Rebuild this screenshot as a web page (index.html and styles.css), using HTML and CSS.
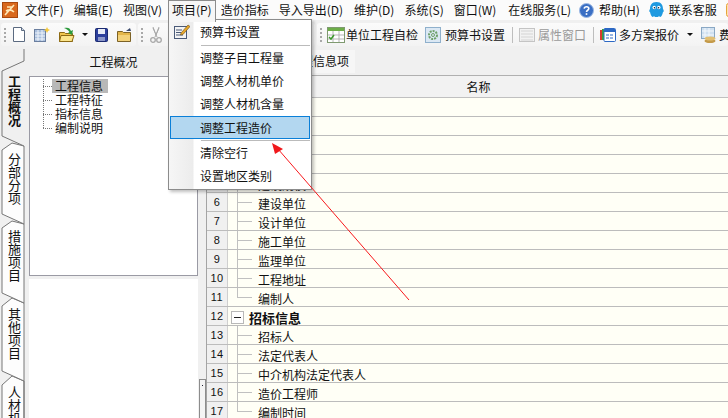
FILE: index.html
```html
<!DOCTYPE html>
<html lang="zh-CN">
<head>
<meta charset="utf-8">
<title>项目</title>
<link rel="stylesheet" href="styles.css">
</head>
<body>
<div class="app">

  <div class="menubar">
    <svg class="logo" width="16" height="16" viewBox="0 0 16 16"><rect x=".5" y=".5" width="15" height="15" fill="#d9691e" stroke="#a8480f"/><path d="M3 13L12 3M5 5h6M4 9c3-2 6-1 8 1" stroke="#ffe9b8" stroke-width="1.6" fill="none"/></svg>
    <span class="menu-item">文件(F)</span>
    <span class="menu-item">编辑(E)</span>
    <span class="menu-item">视图(V)</span>
    <span class="menu-item open">项目(P)</span>
    <span class="menu-item">造价指标</span>
    <span class="menu-item">导入导出(D)</span>
    <span class="menu-item nudge">维护(D)</span>
    <span class="menu-item">系统(S)</span>
    <span class="menu-item">窗口(W)</span>
    <span class="menu-item nudge-more">在线服务(L)</span>
    <svg class="menu-icon help" width="15" height="15" viewBox="0 0 15 15"><circle cx="7.5" cy="7.5" r="7" fill="#3a6fc4" stroke="#9db9e4"/><path d="M5.2 5.6c.2-2.4 4.6-2.4 4.6 0 0 1.7-2.3 1.6-2.3 3.4" stroke="#fff" stroke-width="1.6" fill="none"/><rect x="6.7" y="10.2" width="1.6" height="1.7" fill="#fff"/></svg>
    <span class="menu-item">帮助(H)</span>
    <svg class="menu-icon" width="15" height="16" viewBox="0 0 15 16"><path d="M7.5 0C2.5 0 1 3.5 1 7c-1 1-1 3 0 3 .5 3 2 5 3 5l1-1 1 1h3l1-1 1 1c1 0 2.500-2 3-5 1 0 1-2 0-3 0-3.500-1.500-7-6.500-7z" fill="#1f9ae0"/><circle cx="5.200" cy="5.500" r="1.700" fill="#fff"/><circle cx="9.800" cy="5.500" r="1.700" fill="#fff"/><circle cx="5.500" cy="5.800" r=".8" fill="#123"/><circle cx="9.500" cy="5.800" r=".8" fill="#123"/></svg>
    <span class="menu-item">联系客服</span>
    <svg class="menu-icon" width="16" height="16" viewBox="0 0 16 16"><rect x=".5" y="1.500" width="15" height="13" rx="2" fill="#fbe3b0" stroke="#e8a43c"/><path d="M3 5h10M3 8h10" stroke="#e8a43c"/></svg>
  </div>

  <div class="toolbar">
    <div class="tool-group first">
      <i class="grip"></i>
      <svg class="tool" width="12" height="15" viewBox="0 0 12 15"><path d="M.5.500h8l3 3v11H.5z" fill="#fff" stroke="#5b6a80"/><path d="M8.500.500v3h3" fill="#cfd8e6" stroke="#5b6a80"/></svg>
      <svg class="tool" width="16" height="15" viewBox="0 0 16 15"><rect x=".5" y="2.500" width="11" height="12" fill="#a9bfdd" stroke="#6b7f9f"/><path d="M4 3v11M8 3v11M1 6h10M1 9h10M1 12h10" stroke="#eef3fa"/><path d="M13 0l1 2 2 1-2 1-1 2-1-2-2-1 2-1z" fill="#f5c93c"/></svg>
      <svg class="tool" width="16" height="16" viewBox="0 0 16 16"><path d="M.5 5.500h5l1 1h7v8H.5z" fill="#f0c54e" stroke="#8d6a14"/><path d="M2 8.500h13l-2 6H.5z" fill="#fbe58c" stroke="#8d6a14"/><path d="M5 1c4-1 6 0 7 3l2-1-1 5-4-2 1.500-1C9.500 3 7.500 2 5 1z" fill="#2c9a3c"/></svg>
      <i class="caret"></i>
      <svg class="tool" width="13" height="14" viewBox="0 0 13 14"><rect x=".5" y=".5" width="12" height="13" rx="1" fill="#2c3f9c" stroke="#1b2a70"/><rect x="3" y="1" width="7" height="5" fill="#e8ecf6"/><rect x="3" y="9" width="7" height="4" fill="#8c97c8"/></svg>
      <svg class="tool" width="16" height="14" viewBox="0 0 16 14"><path d="M.5 3.500h5l1 1h7v9H.5z" fill="#e3b64a" stroke="#7c6226"/><path d="M9 3l4-3 1 3z" fill="#3a4a6c"/><path d="M1 7h12v6H1z" fill="#f3d27a"/></svg>
    </div>
    <div class="tool-group second">
      <i class="grip"></i>
      <svg class="tool" width="12" height="16" viewBox="0 0 12 16"><path d="M3 0l3 8 3-8M9 1L5 10M3 1l4 9" stroke="#a8a8a8" fill="none"/><circle cx="3" cy="13" r="2.300" fill="none" stroke="#a8a8a8" stroke-width="1.300"/><circle cx="9" cy="13" r="2.300" fill="none" stroke="#a8a8a8" stroke-width="1.300"/></svg>
    </div>
    <div class="tool-group third">
      <i class="grip"></i>
      <svg class="tool" width="18" height="16" viewBox="0 0 18 16"><rect x=".5" y=".5" width="17" height="15" fill="#fff" stroke="#7f9a70"/><rect x="1" y="1" width="16" height="3" fill="#6dae48"/><path d="M6 4v11M12 4v11M1 8h16M1 12h16" stroke="#b5b5b5"/><path d="M2 10l2 2 3-4" stroke="#3c9a2c" stroke-width="1.500" fill="none"/></svg>
      <span class="tool-label">单位工程自检</span>
      <svg class="tool gear" width="16" height="16" viewBox="0 0 16 16"><rect x=".5" y=".5" width="15" height="15" fill="#dbe8f4" stroke="#8fb0cc"/><circle cx="8" cy="8" r="4" fill="none" stroke="#6ea16a" stroke-width="2" stroke-dasharray="2 1"/><circle cx="8" cy="8" r="1.500" fill="none" stroke="#6ea16a"/></svg>
      <span class="tool-label">预算书设置</span>
      <i class="tool-sep"></i>
      <svg class="tool roomy" width="16" height="14" viewBox="0 0 16 14"><rect x=".5" y=".5" width="15" height="13" fill="#f2f2f2" stroke="#c4c4c4"/><path d="M2 3h12M2 6h12M2 9h12M2 12h12" stroke="#d4d4d4"/></svg>
      <span class="tool-label disabled">属性窗口</span>
      <i class="tool-sep"></i>
      <svg class="tool roomy" width="16" height="14" viewBox="0 0 16 14"><rect x="0" y="2" width="2" height="10" fill="#d83a2c"/><rect x="2" y="1" width="2" height="11" fill="#3ca23c"/><rect x="4" y=".5" width="11.500" height="13" rx="1" fill="#fff" stroke="#2c68c4"/><rect x="4" y="1" width="11" height="3" fill="#2c68c4"/><path d="M6 7h3M10 7h3M6 10h3M10 10h3" stroke="#2c68c4"/></svg>
      <span class="tool-label">多方案报价</span>
      <i class="caret"></i>
      <svg class="tool roomy" width="15" height="16" viewBox="0 0 15 16"><rect x=".5" y=".5" width="13" height="11" fill="#cfe0f0" stroke="#8aa8c4"/><path d="M4 1v10M8 1v10M1 4h12M1 8h12" stroke="#f4f8fc"/><ellipse cx="9" cy="14" rx="5.500" ry="2" fill="#c49a4a"/><ellipse cx="9" cy="11.500" rx="5.500" ry="2" fill="#e2bf72"/></svg>
      <span class="tool-label">费</span>
    </div>
  </div>

  <div class="workspace">
    <div class="tab-rail">
      <svg class="tab-shapes" width="29" height="372" viewBox="0 46 29 372">
        <path d="M24 418V378L12 373 2 382V418" />
        <path d="M24 378L2 368V303L12 295 24 300" />
        <path d="M24 300L2 290V225L12 218 24 221" />
        <path d="M24 221L2 211V147L12 140 24 143V418" />
        <path class="active-shape" d="M24 46V58L2 68V133L24 143" />
      </svg>
      <div class="v-tab active">工程概况</div>
      <div class="v-tab">分部分项</div>
      <div class="v-tab">措施项目</div>
      <div class="v-tab">其他项目</div>
      <div class="v-tab">人材机汇总</div>
    </div>

    <div class="side-panel">
      <div class="panel-title">工程概况</div>
      <div class="tree-box">
        <div class="node"><i class="dots"></i><span class="node-text selected">工程信息</span></div>
        <div class="node"><i class="dots"></i><span class="node-text">工程特征</span></div>
        <div class="node"><i class="dots"></i><span class="node-text">指标信息</span></div>
        <div class="node last"><i class="dots"></i><span class="node-text">编制说明</span></div>
      </div>
      <div class="panel-blank"></div>
    </div>

    <div class="splitter"><div class="split-handle"><i></i></div></div>

    <div class="grid-panel">
      <div class="grid-tabs"><span class="grid-tab">工程信息项</span></div>
      <div class="grid-head">名称</div>
      <div class="grid-row"><span class="num">1</span><span class="name"><i class="branch"></i></span></div>
      <div class="grid-row"><span class="num">2</span><span class="name"><i class="branch"></i></span></div>
      <div class="grid-row"><span class="num">3</span><span class="name"><i class="branch"></i></span></div>
      <div class="grid-row"><span class="num">4</span><span class="name"><i class="branch"></i></span></div>
      <div class="grid-row"><span class="num">5</span><span class="name"><i class="branch"></i>建设规模</span></div>
      <div class="grid-row"><span class="num">6</span><span class="name"><i class="branch"></i>建设单位</span></div>
      <div class="grid-row"><span class="num">7</span><span class="name"><i class="branch"></i>设计单位</span></div>
      <div class="grid-row"><span class="num">8</span><span class="name"><i class="branch"></i>施工单位</span></div>
      <div class="grid-row"><span class="num">9</span><span class="name"><i class="branch"></i>监理单位</span></div>
      <div class="grid-row"><span class="num">10</span><span class="name"><i class="branch"></i>工程地址</span></div>
      <div class="grid-row"><span class="num">11</span><span class="name"><i class="branch end"></i>编制人</span></div>
      <div class="grid-row"><span class="num">12</span><span class="name group"><i class="toggle"></i>招标信息</span></div>
      <div class="grid-row"><span class="num">13</span><span class="name"><i class="branch"></i>招标人</span></div>
      <div class="grid-row"><span class="num">14</span><span class="name"><i class="branch"></i>法定代表人</span></div>
      <div class="grid-row"><span class="num">15</span><span class="name"><i class="branch"></i>中介机构法定代表人</span></div>
      <div class="grid-row"><span class="num">16</span><span class="name"><i class="branch"></i>造价工程师</span></div>
      <div class="grid-row"><span class="num">17</span><span class="name"><i class="branch end"></i>编制时间</span></div>
    </div>
  </div>

  <div class="dropdown">
    <div class="drop-item">
      <svg class="drop-icon" width="16" height="15" viewBox="0 0 16 15"><rect x=".5" y="2.500" width="12" height="12" fill="#f4f4f4" stroke="#4a5a78"/><path d="M2 6h6M2 8.500h5M2 11h7" stroke="#4a5a78"/><path d="M7 9L14 1l2 1.500L9 10.500 6.500 11z" fill="#e8a82c" stroke="#6a4a10" stroke-width=".6"/></svg>
      预算书设置
    </div>
    <div class="drop-sep"></div>
    <div class="drop-item">调整子目工程量</div>
    <div class="drop-item">调整人材机单价</div>
    <div class="drop-item">调整人材机含量</div>
    <div class="drop-item current">调整工程造价</div>
    <div class="drop-sep"></div>
    <div class="drop-item">清除空行</div>
    <div class="drop-item">设置地区类别</div>
  </div>

  <svg class="callout" width="728" height="418" viewBox="0 0 728 418">
    <path d="M409 300L278 149" stroke="#f8181c" stroke-width="1" fill="none"/>
    <path d="M272 143L283 149 275 154z" fill="#f0181c"/>
  </svg>
</div>
</body>
</html>
```

FILE: styles.css
```css
html, body {
    margin: 0;
    padding: 0;
}
body {
    font: normal 12px/16px "Noto Sans CJK SC", "Liberation Sans", sans-serif;
    color: #111;
    background: #f0f0f0;
}
i {
    display: block;
    font-style: normal;
}

.app {
    position: relative;
    display: flex;
    flex-direction: column;
    width: 728px;
    height: 418px;
    overflow: hidden;
}

/* menu bar */
.menubar {
    display: flex;
    align-items: center;
    flex: none;
    height: 20px;
    margin-bottom: 3px;
    padding-left: 2px;
    background: #fbfbfb;
}
.logo {
    flex: none;
    margin-right: 2px;
}
.menu-item {
    flex: none;
    padding: 0 5px;
    white-space: nowrap;
}
.menu-item.open {
    position: relative;
    z-index: 3;
    height: 21px;
    margin: 1px 0 0 1px;
    padding: 0 3px;
    line-height: 18px;
    border: 1px solid #8c8c8c;
    border-bottom: 0;
    background: #f6f6f6;
}
.menu-item.nudge {
    margin-left: 1px;
}
.menu-item.nudge-more {
    margin-left: 2px;
}
.menu-icon {
    flex: none;
    margin: 0 0 0 4px;
}
.menu-icon.help {
    margin-left: 3px;
}

/* toolbar */
.toolbar {
    display: flex;
    flex: none;
    height: 23px;
    padding-left: 1px;
    gap: 2px;
}
.tool-group {
    display: flex;
    align-items: center;
    height: 23px;
    border-radius: 3px;
    background: linear-gradient(#fbfbfb, #f3f3f3);
    overflow: hidden;
}
.tool-group.first {
    width: 135px;
    flex: none;
}
.tool-group.second {
    width: 177px;
    flex: none;
}
.tool-group.third {
    flex: 1;
}
.grip {
    flex: none;
    width: 2px;
    height: 14px;
    margin: 0 7px 0 3px;
    background: repeating-linear-gradient(#a8a8a8 0 2px, transparent 2px 4px);
}
.tool {
    flex: none;
    margin-right: 9px;
}
.third .grip {
    margin-right: 5px;
}
.third .tool {
    margin-right: 1px;
}
.third .gear {
    margin-left: 7px;
    margin-right: 4px;
}
.third .roomy {
    margin-right: 3px;
}
.caret {
    flex: none;
    width: 0;
    height: 0;
    margin: 0 7px 0 -2px;
    border-left: 3px solid transparent;
    border-right: 3px solid transparent;
    border-top: 3px solid #111;
}
.third .caret {
    margin: 0 8px;
}
.tool-label {
    flex: none;
    white-space: nowrap;
}
.tool-label.disabled {
    color: #9a9a9a;
}
.tool-sep {
    flex: none;
    width: 1px;
    height: 16px;
    margin: 0 6px 0 7px;
    background: #bdbdbd;
}

/* body of the window */
.workspace {
    display: flex;
    flex: 1;
    min-height: 0;
    padding-top: 3px;
    background: #f0f0f0;
}

.tab-rail {
    position: relative;
    flex: none;
    width: 29px;
    padding-top: 26px;
}
.tab-shapes {
    position: absolute;
    left: 0;
    top: 0;
}
.tab-shapes path {
    fill: #fdfdfd;
    stroke: #777;
}
.tab-shapes .active-shape {
    fill: #f0f0f0;
}
.v-tab {
    position: relative;
    width: 20px;
    height: 52px;
    margin: 0 0 25.700px 4px;
    font-size: 13px;
    line-height: 20px;
    writing-mode: vertical-rl;
    text-orientation: upright;
    white-space: nowrap;
}
.v-tab.active {
    font-weight: bold;
}

.side-panel {
    display: flex;
    flex-direction: column;
    flex: none;
    width: 169px;
}
.panel-title {
    height: 27px;
    line-height: 26px;
    text-align: center;
}
.tree-box {
    box-sizing: border-box;
    height: 200px;
    padding: 2px 0 0 13px;
    border: 1px solid #9a9aa4;
    background: #fff;
}
.node {
    display: flex;
    height: 14px;
}
.dots {
    flex: none;
    width: 9px;
    background-image:
        linear-gradient(#777 50%, transparent 50%),
        linear-gradient(to right, #777 50%, transparent 50%);
    background-size: 1px 2px, 2px 1px;
    background-position: 0 0, 0 7px;
    background-repeat: repeat-y, repeat-x;
}
.last .dots {
    height: 8px;
}
.node-text {
    padding: 0 5px 0 3px;
    height: 14px;
    line-height: 14px;
    white-space: nowrap;
}
.node-text.selected {
    background: #b8b8b8;
}
.panel-blank {
    flex: 1;
    margin-top: 3px;
    background: #fff;
}

.splitter {
    display: flex;
    flex-direction: column;
    justify-content: flex-end;
    flex: none;
    width: 9px;
}
.split-handle {
    box-sizing: border-box;
    width: 7px;
    height: 39px;
    margin-left: 1px;
    padding: 5px 2px 0;
    border: 1px solid #8c8c8c;
    border-bottom: 0;
    background: #f4f4f4;
}
.split-handle i {
    width: 1px;
    height: 1px;
    background: #223;
}

.grid-panel {
    flex: 1;
    min-width: 0;
    margin-left: -1px;
    border-left: 1px solid #a4a4a4;
}
.grid-tabs {
    display: flex;
    box-sizing: border-box;
    height: 27px;
    margin-left: 21px;
    padding: 1px 0 0 20px;
}
.grid-tab {
    box-sizing: border-box;
    width: 107px;
    height: 23px;
    padding-right: 6px;
    line-height: 22px;
    text-align: right;
    background: #f6f6f6;
}
.grid-head {
    height: 21px;
    margin-top: -1px;
    padding-left: 22px;
    line-height: 22px;
    text-align: center;
    border-top: 1px solid #b0b0b0;
    border-bottom: 1px solid #c0c0c0;
    background: #f2f2f2;
}
.grid-row {
    display: flex;
    box-sizing: border-box;
    height: 19px;
    border-bottom: 1px solid #bcbcbc;
    background: #fffff6;
}
.num {
    flex: none;
    box-sizing: border-box;
    width: 21px;
    font: 11px/18px "Liberation Sans", sans-serif;
    letter-spacing: .5px;
    text-align: center;
    background: #f0f0f0;
    border-right: 1px solid #cfcfcf;
}
.name {
    display: flex;
    flex: 1;
    padding-left: 9px;
    line-height: 21px;
    white-space: nowrap;
    overflow: hidden;
}
.branch {
    flex: none;
    width: 21px;
    height: 19px;
    background-image: linear-gradient(#c0c0c0, #c0c0c0), linear-gradient(#c0c0c0, #c0c0c0);
    background-size: 1px 19px, 15px 1px;
    background-position: 0 0, 0 9px;
    background-repeat: no-repeat;
}
.branch.end {
    background-size: 1px 10px, 15px 1px;
}
.name.group {
    padding-left: 3px;
    font-size: 13px;
    font-weight: bold;
}
.toggle {
    flex: none;
    box-sizing: border-box;
    width: 13px;
    height: 13px;
    margin: 4px 5px 0 0;
    border: 1px solid #b8b8b8;
    background: linear-gradient(#222, #222) center / 7px 1px no-repeat, #fff;
}

/* open menu */
.dropdown {
    position: absolute;
    left: 168px;
    top: 19px;
    z-index: 2;
    box-sizing: border-box;
    width: 144px;
    height: 171px;
    padding: 1px 1px 0;
    border: 1px solid #8c8c8c;
    background: linear-gradient(to right, #f6f6f6, #ececec 24px, #fff 25px);
    box-shadow: 2px 2px 3px rgba(0, 0, 0, .25);
}
.drop-item {
    position: relative;
    box-sizing: border-box;
    height: 23px;
    padding-left: 30px;
    line-height: 22px;
    white-space: nowrap;
}
.drop-item.current {
    padding-left: 29px;
    line-height: 21px;
    border: 1px solid #0a7fd8;
    background: #b3d7f0;
}
.drop-icon {
    position: absolute;
    left: 4px;
    top: 3px;
}
.drop-sep {
    height: 1px;
    margin: 1px 0 1px 31px;
    background: #bbb;
}

/* red arrow drawn over the picture */
.callout {
    position: absolute;
    left: 0;
    top: 0;
    z-index: 4;
    pointer-events: none;
}
```
